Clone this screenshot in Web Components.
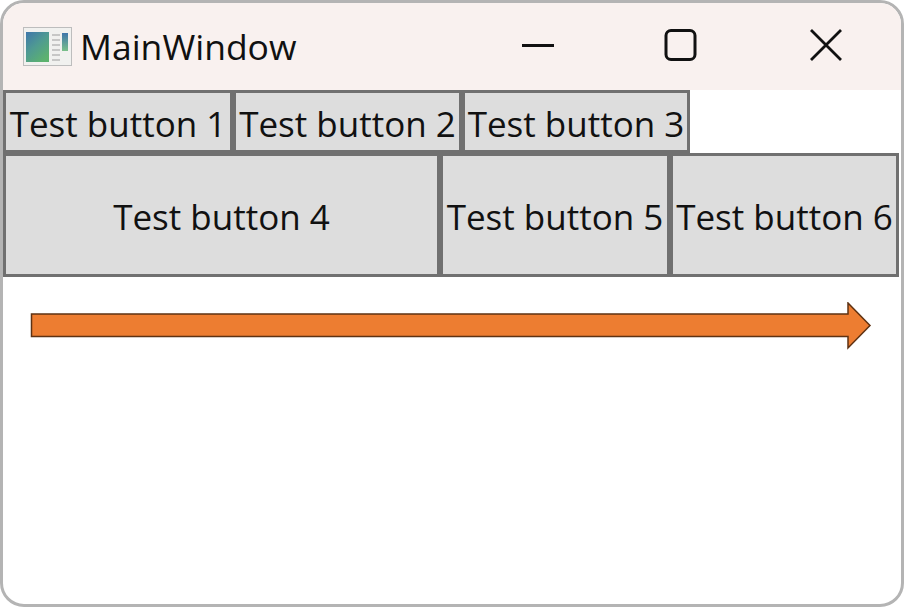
<!DOCTYPE html>
<html lang="en"><head><meta charset="utf-8"><title>MainWindow</title>
<style>html,body{margin:0;padding:0;background:#fff;height:100%;overflow:hidden}</style></head>
<body>
<main-window title-text="MainWindow">
  <button-row>
    <test-button style="width:230px">Test button 1</test-button>
    <test-button style="width:229px">Test button 2</test-button>
    <test-button style="width:228px">Test button 3</test-button>
  </button-row>
  <button-row tall>
    <test-button style="flex:1">Test button 4</test-button>
    <test-button style="width:230px">Test button 5</test-button>
    <test-button style="width:229px">Test button 6</test-button>
  </button-row>
  <arrow-shape></arrow-shape>
</main-window>
<script>
const FONT='"Open Sans","Noto Sans","Liberation Sans",sans-serif';
class MainWindow extends HTMLElement{
  constructor(){super();const s=this.attachShadow({mode:'open'});
  s.innerHTML=`<style>
  :host{display:flex;flex-direction:column;box-sizing:border-box;width:904px;height:607px;border:3px solid #b4b4b4;border-radius:24px;overflow:hidden;background:#fff;font-family:${FONT};color:#111}
  header{display:flex;align-items:center;height:87px;flex:none;background:#f9f1ef;padding-left:20px;box-sizing:border-box}
  .t{font-size:35.5px;line-height:1;margin-left:7px;flex:1;padding-bottom:0}
  .c{display:flex;flex:none;align-items:center;padding-bottom:4px}
  .c svg{display:block}
  main{flex:1;display:flex;flex-direction:column;min-height:0}
  </style>
  <header>
    <svg width="50" height="40" viewBox="0 0 50 40" aria-hidden="true" style="margin-top:1px">
      <defs><linearGradient id="g" x1="0" y1="0" x2=".7" y2="1"><stop offset="0" stop-color="#3f76ab"/><stop offset=".5" stop-color="#4f9a92"/><stop offset="1" stop-color="#5cb26e"/></linearGradient>
      <linearGradient id="h" x1="0" y1="0" x2="0" y2="1"><stop offset="0" stop-color="#3f76ab"/><stop offset="1" stop-color="#7ac08a"/></linearGradient></defs>
      <rect x=".5" y=".5" width="48" height="38" fill="#f1f1ef" stroke="#bdbdbd"/>
      <rect x="3" y="5" width="23" height="30" fill="url(#g)"/>
      <rect x="39" y="6" width="6" height="18" fill="url(#h)"/>
      <path d="M29 8h8M29 13h8M29 18h8M29 23h8M29 28h8M29 33h8" stroke="#b9b9b9" stroke-width="1.5"/>
    </svg>
    <span class="t"></span>
    <div class="c">
      <svg width="34" height="34" viewBox="0 0 34 34" style="margin-right:108px"><path d="M1 17.5H33" stroke="#111" stroke-width="3"/></svg>
      <svg width="34" height="34" viewBox="0 0 34 34" style="margin-right:112px"><rect x="3" y="2.500" width="29" height="29" rx="5" fill="none" stroke="#111" stroke-width="3"/></svg>
      <svg width="34" height="34" viewBox="0 0 34 34" style="margin-right:58px"><path d="M2 2L32 32M32 2L2 32" stroke="#111" stroke-width="2.8"/></svg>
    </div>
  </header>
  <main><slot></slot></main>`;
  s.querySelector('.t').textContent=this.getAttribute('title-text');}
}
class ButtonRow extends HTMLElement{
  constructor(){super();this.attachShadow({mode:'open'}).innerHTML=`<style>
  :host{display:flex;flex:none;height:63px;padding-right:2px;--label-drop:4px}
  :host([tall]){height:124px;--label-drop:2px}
  </style><slot></slot>`;}
}
class TestButton extends HTMLElement{
  constructor(){super();this.attachShadow({mode:'open'}).innerHTML=`<style>
  :host{display:flex;align-items:center;justify-content:center;box-sizing:border-box;border:3px solid #707070;background:#dddddd;font-size:35px;color:#111;white-space:nowrap;overflow:hidden;padding-top:var(--label-drop)}
  </style><span><slot></slot></span>`;}
}
class ArrowShape extends HTMLElement{
  constructor(){super();this.attachShadow({mode:'open'}).innerHTML=`<style>
  :host{display:block;padding:25px 0 0 27px}
  svg{display:block}
  </style>
  <svg width="842" height="48" viewBox="0 0 842 48" aria-hidden="true"><path d="M1.500 12H818V1L840 23.500L818 46V34.500H1.500Z" fill="#ed7d31" stroke="#5e3213" stroke-width="1.500"/></svg>`;}
}
customElements.define('main-window',MainWindow);
customElements.define('button-row',ButtonRow);
customElements.define('test-button',TestButton);
customElements.define('arrow-shape',ArrowShape);
</script>
</body></html>
